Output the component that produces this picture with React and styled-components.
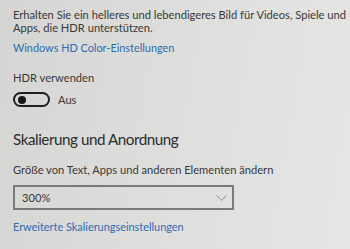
import React from "react";
import styled, { createGlobalStyle } from "styled-components";

const GlobalStyle = createGlobalStyle`
    html, body {
        margin: 0;
        padding: 0;
        height: 100%;
    }

    body {
        background: linear-gradient(100deg, #d5d5d3 0%, #dfdfdd 55%, #e6e6e4 100%);
        font-family: Lato, "Open Sans", sans-serif;
        color: #3a3a3a;
        overflow: hidden;
    }
`;

const Page = styled.div`
    display: flex;
    flex-direction: column;
    align-items: flex-start;
    padding: 8px 0 0 13px;
    white-space: nowrap;
`;

const Text = styled.p`
    margin: 0;
    font-size: 11.15px;
    line-height: 13px;
    color: #383838;
`;

const Link = styled.a`
    display: block;
    font-size: 10.9px;
    line-height: 14px;
    color: #2d6cb2;
    text-decoration: none;
    margin-top: ${(p) => p.$top || 0}px;
`;

const Label = styled(Text)`
    margin-top: ${(p) => p.$top || 0}px;
`;

const ToggleRow = styled.div`
    display: flex;
    align-items: center;
    gap: 8px;
    margin-top: 8px;
    font-size: 11.15px;
    color: #383838;
`;

const Switch = styled.span`
    box-sizing: border-box;
    width: 37px;
    height: 15px;
    border: 2px solid #202020;
    border-radius: 8px;
    display: flex;
    align-items: center;
    padding-left: 3px;

    &::before {
        content: "";
        width: 8px;
        height: 8px;
        border-radius: 50%;
        background: #151515;
    }
`;

const Heading = styled.h2`
    margin: 22px 0 0;
    font-size: 15.2px;
    font-weight: 400;
    line-height: 20px;
    letter-spacing: -0.45px;
    color: #2c2c2c;
`;

const Select = styled.div`
    box-sizing: border-box;
    width: 221px;
    height: 25px;
    margin-top: 9px;
    border: 2px solid #7a7a7a;
    display: flex;
    align-items: center;
    justify-content: space-between;
    padding: 0 5px 0 7px;
    font-size: 11.15px;
    color: #383838;
`;

const Chevron = () => (
    <svg width="11" height="6" viewBox="0 0 11 6" fill="none">
        <path d="M0.5 0.5 L5.5 5.2 L10.5 0.5" stroke="#8a8a8a" strokeWidth="1" />
    </svg>
);

const App = () => (
    <>
        <GlobalStyle />
        <Page>
            <Text>
                Erhalten Sie ein helleres und lebendigeres Bild für Videos, Spiele und
                <br />
                Apps, die HDR unterstützen.
            </Text>
            <Link href="#" $top={6.5}>Windows HD Color-Einstellungen</Link>
            <Label $top={16.5}>HDR verwenden</Label>
            <ToggleRow>
                <Switch />
                <span>Aus</span>
            </ToggleRow>
            <Heading>Skalierung und Anordnung</Heading>
            <Label $top={14}>Größe von Text, Apps und anderen Elementen ändern</Label>
            <Select>
                <span>300%</span>
                <Chevron />
            </Select>
            <Link href="#" $top={9.5}>Erweiterte Skalierungseinstellungen</Link>
        </Page>
    </>
);

export default App;
